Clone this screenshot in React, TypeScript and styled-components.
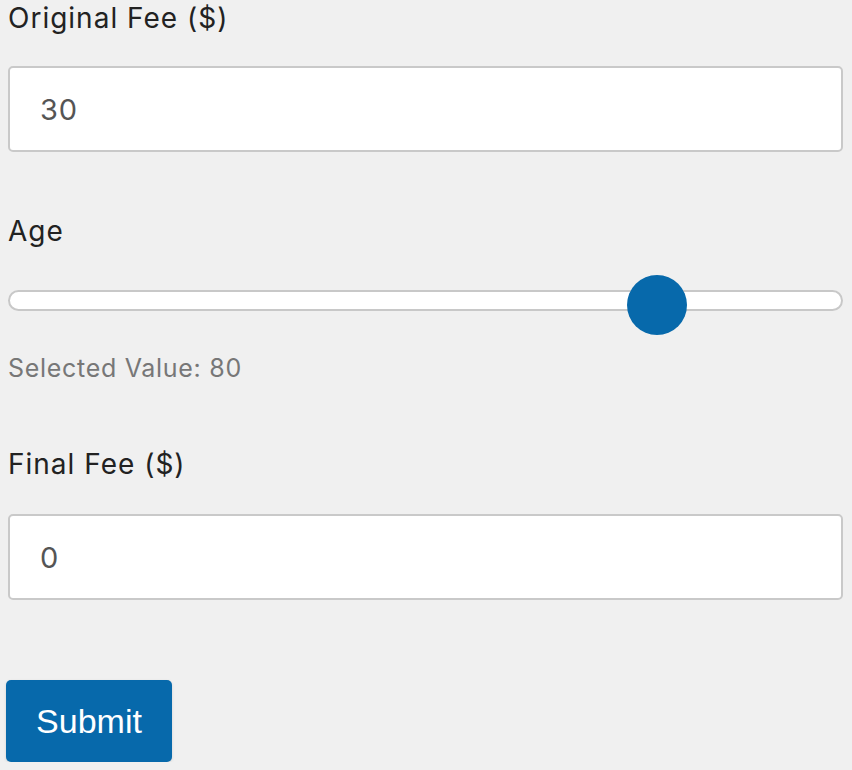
import React, { useState } from "react";
import styled, { createGlobalStyle } from "styled-components";

const Global = createGlobalStyle`
  html, body { margin: 0; padding: 0; background: #f0f0f0; }
  body { font-family: "Inter", "Noto Sans", sans-serif; }
`;

const Form = styled.form`
  display: flex;
  flex-direction: column;
  padding: 0 9px 0 8px;
`;

const Label = styled.label<{ $top: number }>`
  display: block;
  margin-top: ${(p) => p.$top}px;
  font-size: 28px;
  line-height: 36px;
  color: #222;
  letter-spacing: 1px;
`;

const TextInput = styled.input<{ $gap: number }>`
  box-sizing: border-box;
  width: 100%;
  height: 86px;
  margin-top: ${(p) => p.$gap}px;
  padding: 0 30px;
  border: 2px solid #c9c9c9;
  border-radius: 5px;
  background: #fff;
  font-family: "Inter", "Noto Sans", sans-serif;
  font-size: 29px;
  letter-spacing: 0.8px;
  color: #555;
  outline: none;
`;

const Range = styled.input`
  -webkit-appearance: none;
  appearance: none;
  width: 100%;
  height: 60px;
  margin: 21px 0 0;
  background: transparent;
  &::-webkit-slider-runnable-track {
    box-sizing: border-box;
    height: 21px;
    border: 2px solid #c8c8c8;
    border-radius: 11px;
    background: #fff;
  }
  &::-webkit-slider-thumb {
    -webkit-appearance: none;
    appearance: none;
    width: 60px;
    height: 60px;
    border-radius: 50%;
    background: #0769ab;
    border: none;
    margin-top: -17px;
  }
`;

const Hint = styled.div`
  margin-top: 22px;
  font-size: 25px;
  line-height: 32px;
  color: #777;
  letter-spacing: 0.7px;
`;

const Button = styled.button`
  align-self: flex-start;
  margin: 80px 0 0 -2px;
  width: 166px;
  height: 82px;
  border: none;
  border-radius: 5px;
  background: #0769ab;
  color: #fff;
  font-family: "Liberation Sans", Arial, sans-serif;
  font-size: 34px;
  box-shadow: 0 1px 3px rgba(0, 0, 0, 0.12);
`;

export default function App() {
  const [age, setAge] = useState(80);
  return (
    <>
      <Global />
      <Form onSubmit={(e) => e.preventDefault()}>
        <Label $top={0}>Original Fee ($)</Label>
        <TextInput $gap={30} defaultValue="30" />
        <Label $top={61}>Age</Label>
        <Range type="range" min={0} max={100} value={age} onChange={(e) => setAge(Number(e.target.value))} />
        <Hint>Selected Value: {age}</Hint>
        <Label $top={62}>Final Fee ($)</Label>
        <TextInput $gap={32} defaultValue="0" readOnly />
        <Button type="submit">Submit</Button>
      </Form>
    </>
  );
}
